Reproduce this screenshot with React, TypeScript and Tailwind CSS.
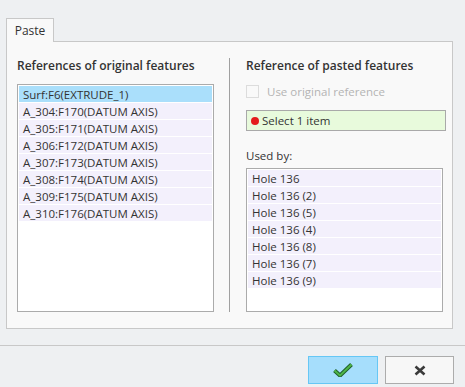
const originals = [
  'Surf:F6(EXTRUDE_1)',
  'A_304:F170(DATUM AXIS)',
  'A_305:F171(DATUM AXIS)',
  'A_306:F172(DATUM AXIS)',
  'A_307:F173(DATUM AXIS)',
  'A_308:F174(DATUM AXIS)',
  'A_309:F175(DATUM AXIS)',
  'A_310:F176(DATUM AXIS)',
]

const usedBy = [
  'Hole 136',
  'Hole 136 (2)',
  'Hole 136 (5)',
  'Hole 136 (4)',
  'Hole 136 (8)',
  'Hole 136 (7)',
  'Hole 136 (9)',
]

function ListBox({ items, selected }: { items: string[]; selected?: number }) {
  return (
    <div className="flex-1 border border-[#ababab] bg-white p-px">
      {items.map((item, i) => (
        <div
          key={item}
          className={`h-[17px] border-b border-white pl-[4px] text-[11.5px] leading-[17px] ${
            i === selected ? 'bg-[#aadffb]' : 'bg-[#f3f0fc]'
          }`}
        >
          {item}
        </div>
      ))}
    </div>
  )
}

export default function App() {
  return (
    <div className="h-[387px] w-[465px] bg-[#eef0f2] font-['Open_Sans',sans-serif] text-[#333]">
      <div className="px-[6px] pt-[18px]">
        <div className="relative z-10 -mb-px flex h-[24px] w-[48px] items-center justify-center border border-b-0 border-[#c8c8c8] bg-[#f9f9f9] text-[12px]">
          Paste
        </div>
        <div className="flex h-[288px] w-[447px] border border-[#c8c8c8] bg-[#f9f9f9] py-[16px] pl-[10px]">
          <div className="flex w-[197px] flex-col">
            <div className="h-[26px] text-[12px] font-semibold leading-[15px]">
              References of original features
            </div>
            <ListBox items={originals} selected={0} />
          </div>
          <div className="ml-[15px] w-px bg-[#a0a0a0]" />
          <div className="ml-[16px] flex w-[200px] flex-col">
            <div className="h-[26px] text-[12px] font-semibold leading-[15px]">
              Reference of pasted features
            </div>
            <div className="flex h-[15px] items-center gap-[8px] text-[11.5px] text-[#b4b4b4]">
              <div className="h-[13px] w-[13px] border border-[#dcdcdc] bg-[#f9f9f9]" />
              Use original reference
            </div>
            <div className="mt-[11px] flex h-[21px] items-center border border-[#a9a9a9] bg-[#e8fadc] pl-[4px] text-[11.5px]">
              <span className="mr-[3px] h-[8px] w-[8px] rounded-full bg-[#e41c1c]" />
              Select 1 item
            </div>
            <div className="mt-[18px] h-[19px] text-[11.5px] leading-[14px]">Used by:</div>
            <div className="flex w-[197px] flex-1">
              <ListBox items={usedBy} />
            </div>
          </div>
        </div>
      </div>
      <div className="mt-[16px] h-px bg-[#c8c8c8]" />
      <div className="mt-[10px] flex justify-end gap-[7px] pr-[11px]">
        <button className="flex h-[28px] w-[70px] items-center justify-center border border-[#66c7f5] bg-[#a6defc]">
          <svg width="20" height="14" viewBox="0 0 20 14">
            <path
              d="M1.5 7.5 L7 12.5 L18.5 1.5"
              fill="none"
              stroke="#1f5f2a"
              strokeWidth="4"
              strokeLinejoin="round"
            />
            <path
              d="M1.5 7.5 L7 12.5 L18.5 1.5"
              fill="none"
              stroke="#4fb548"
              strokeWidth="2"
              strokeLinejoin="round"
            />
          </svg>
        </button>
        <button className="flex h-[28px] w-[69px] items-center justify-center border border-[#acacac] bg-[#f7f7f7]">
          <svg width="12" height="11" viewBox="0 0 12 11">
            <path d="M1.5 1.5 L10.5 9.5 M10.5 1.5 L1.5 9.5" stroke="#3a3a3a" strokeWidth="2.6" />
          </svg>
        </button>
      </div>
    </div>
  )
}
